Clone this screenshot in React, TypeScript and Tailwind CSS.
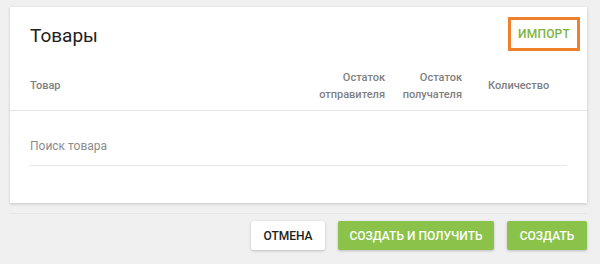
import React from 'react';

const font = { fontFamily: 'Roboto, "Noto Sans", sans-serif' };

export default function App() {
  return (
    <div className="w-[600px] h-[264px] bg-[#f0f0f0] pt-[7px] pl-[10px] pr-[13px] text-[#212121]" style={font}>
      {/* Card */}
      <div className="bg-white h-[196px] shadow-[0_1px_3px_rgba(0,0,0,0.18)]">
        <div className="flex items-center justify-between pl-[20px] pr-[7px] pt-[6px] h-[47px]">
          <h2 className="text-[19px] leading-none text-[#212121] pt-[3px]">Товары</h2>
          <button className="h-[34px] px-[7px] border-[3px] border-[#f07f2c] text-[12px] font-medium uppercase text-[#7cb342] tracking-[0.2px]">
            Импорт
          </button>
        </div>

        {/* Table header */}
        <div className="flex items-center h-[56px] mx-[20px] text-[11px] font-medium text-[#7f7f7f] leading-[17px] pt-[7px]">
          <div className="flex-1">Товар</div>
          <div className="w-[100px] text-right">Остаток<br />отправителя</div>
          <div className="w-[77px] text-right">Остаток<br />получателя</div>
          <div className="w-[105px] pl-[26px]">Количество</div>
        </div>
        <div className="h-px bg-[#e6e6e6]" />

        {/* Search */}
        <div className="mx-[20px] mt-[26px] border-b border-[#e6e6e6] h-[29px] text-[12px] text-[#8c8c8c]">
          Поиск товара
        </div>
      </div>

      {/* Footer */}
      <div className="mt-[10px] border-t border-[#e6e6e6] pt-[7px] flex justify-end gap-[13px]">
        <button className="h-[29px] w-[74px] bg-white text-[12px] font-medium uppercase text-[#212121] shadow-[0_1px_3px_rgba(0,0,0,0.22)] rounded-[2px]">
          Отмена
        </button>
        <button className="h-[29px] w-[156px] bg-[#8bc34a] text-[12px] font-medium uppercase text-white shadow-[0_1px_3px_rgba(0,0,0,0.22)] rounded-[2px]">
          Создать и получить
        </button>
        <button className="h-[29px] w-[80px] bg-[#8bc34a] text-[12px] font-medium uppercase text-white shadow-[0_1px_3px_rgba(0,0,0,0.22)] rounded-[2px]">
          Создать
        </button>
      </div>
    </div>
  );
}
